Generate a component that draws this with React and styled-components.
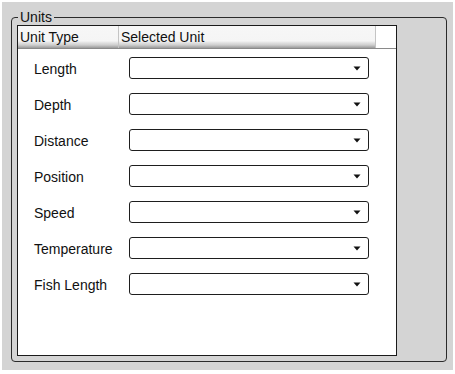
import React from "react";
import styled, { createGlobalStyle } from "styled-components";

const Global = createGlobalStyle`
  html, body { margin: 0; padding: 0; background: #ffffff; }
  body { font-family: "Liberation Sans", Arial, sans-serif; }
`;

const Window = styled.div`
  box-sizing: border-box;
  margin: 2px;
  width: 451px;
  height: 368px;
  background: #d4d4d4;
  padding: 7px 0 0 9px;
`;

const Group = styled.fieldset`
  box-sizing: border-box;
  width: 436px;
  margin: 0;
  padding: 0 0 5px 5px;
  border: 1px solid #2b2b2b;
  border-radius: 4px;
`;

const Legend = styled.legend`
  margin-left: 1px;
  padding: 0 2px;
  font-size: 14px;
  line-height: 16px;
  color: #111;
`;

const ListBox = styled.div`
  box-sizing: border-box;
  width: 380px;
  height: 331px;
  background: #fff;
  border: 1px solid #1a1a1a;
  display: flex;
  flex-direction: column;
`;

const Header = styled.div`
  display: flex;
  border-bottom: 1px solid #8a8a8a;
`;

const HeaderCells = styled.div`
  display: flex;
  width: 358px;
  height: 22px;
  box-sizing: border-box;
  border-right: 1px solid #c4c4c4;
  background: linear-gradient(
    to bottom,
    #f7f7f7 0%,
    #f5f5f5 68%,
    #e2e2e2 76%,
    #cfcfcf 86%,
    #9a9a9a 100%
  );
`;

const HeaderCell = styled.div`
  box-sizing: border-box;
  width: ${(p) => p.$w}px;
  padding-left: 2px;
  display: flex;
  align-items: center;
  font-size: 14px;
  color: #111;
  border-right: ${(p) => (p.$sep ? "1px solid #c4c4c4" : "none")};
  white-space: nowrap;
`;

const Rows = styled.div`
  display: flex;
  flex-direction: column;
  gap: 14px;
  padding: 8px 0 0 16px;
`;

const Row = styled.div`
  display: flex;
  align-items: center;
  height: 22px;
`;

const Label = styled.div`
  width: 95px;
  font-size: 14px;
  color: #111;
  padding-top: 2px;
`;

const Dropdown = styled.div`
  box-sizing: border-box;
  width: 240px;
  height: 22px;
  border: 1px solid #1e1e1e;
  border-radius: 3px;
  background: #fff;
  display: flex;
  align-items: center;
  justify-content: flex-end;
  padding-right: 7px;
`;

const Arrow = () => (
  <svg width="8" height="5" viewBox="0 0 8 5" style={{ display: "block", marginTop: "1px" }}>
    <polygon points="0.5,0.5 7.5,0.5 4,4.5" fill="#111" />
  </svg>
);

const units = [
  "Length",
  "Depth",
  "Distance",
  "Position",
  "Speed",
  "Temperature",
  "Fish Length",
];

export default function App() {
  return (
    <>
      <Global />
      <Window>
        <Group>
          <Legend>Units</Legend>
          <ListBox>
            <Header>
              <HeaderCells>
                <HeaderCell $w={101} $sep>Unit Type</HeaderCell>
                <HeaderCell $w={256}>Selected Unit</HeaderCell>
              </HeaderCells>
            </Header>
            <Rows>
              {units.map((u) => (
                <Row key={u}>
                  <Label>{u}</Label>
                  <Dropdown>
                    <Arrow />
                  </Dropdown>
                </Row>
              ))}
            </Rows>
          </ListBox>
        </Group>
      </Window>
    </>
  );
}
